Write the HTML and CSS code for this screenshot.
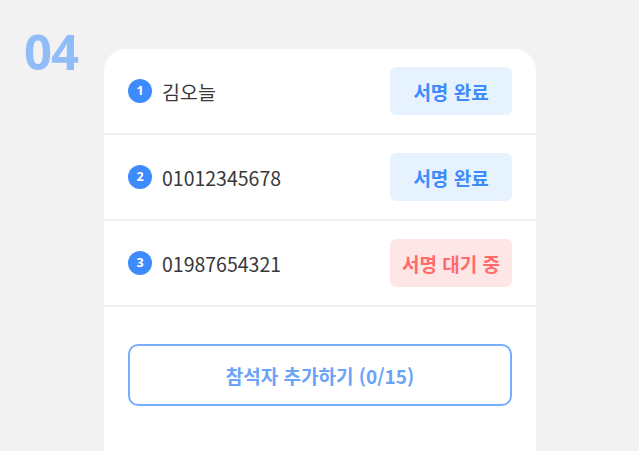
FILE: index.html
```html
<!DOCTYPE html>
<html lang="ko">
<head>
<meta charset="utf-8">
<link rel="stylesheet" href="styles.css">
</head>
<body>
<div class="page">
  <div class="step">04</div>
  <div class="card">
    <div class="row">
      <span class="num">1</span>
      <span class="name">김오늘</span>
      <span class="badge done">서명 완료</span>
    </div>
    <div class="row">
      <span class="num">2</span>
      <span class="name">01012345678</span>
      <span class="badge done">서명 완료</span>
    </div>
    <div class="row">
      <span class="num">3</span>
      <span class="name">01987654321</span>
      <span class="badge wait">서명 대기 중</span>
    </div>
    <div class="actions">
      <button class="add">참석자 추가하기 (0/15)</button>
    </div>
  </div>
</div>
</body>
</html>
```

FILE: styles.css
```css
html, body {
  margin: 0;
  padding: 0;
  background: #f2f2f2;
  overflow: hidden;
  height: 451px;
}
body {
  font-family: "Noto Sans CJK KR", "Noto Sans", sans-serif;
}
.page {
  display: flex;
  align-items: flex-start;
  padding: 21px 0 0 24px;
}
.step {
  font-family: "Noto Sans", "Noto Sans CJK KR", sans-serif;
  font-weight: 700;
  font-size: 49px;
  line-height: 60px;
  color: #90bcf8;
  width: 56px;
  letter-spacing: -1px;
}
.card {
  margin-left: 24px;
  margin-top: 28px;
  width: 432px;
  height: 420px;
  background: #fff;
  border-radius: 22px 22px 0 0;
  display: flex;
  flex-direction: column;
}
.row {
  display: flex;
  align-items: center;
  height: 84px;
  padding: 0 24px;
  border-bottom: 2px solid #f1f1f1;
}
.num {
  width: 24px;
  height: 24px;
  border-radius: 50%;
  background: #3d8bfd;
  color: #fff;
  font-family: "Noto Sans", sans-serif;
  font-weight: 700;
  font-size: 12.5px;
  line-height: 24px;
  text-align: center;
  flex: none;
}
.name {
  margin-left: 10px;
  font-size: 19.5px;
  font-weight: 400;
  color: #383838;
  flex: 1;
}
.badge {
  width: 122px;
  height: 48px;
  border-radius: 6px;
  display: flex;
  align-items: center;
  justify-content: center;
  font-weight: 700;
  font-size: 19px;
}
.done {
  background: #e7f2ff;
  color: #3d8bfd;
}
.wait {
  background: #ffe6e6;
  color: #ff6b6b;
}
.actions {
  padding: 37px 24px 0;
}
.add {
  width: 384px;
  height: 62px;
  border: 2px solid #78acfc;
  border-radius: 10px;
  background: #fff;
  color: #6aa3f8;
  font-family: "Noto Sans CJK KR", "Noto Sans", sans-serif;
  font-weight: 700;
  font-size: 19px;
  display: block;
}
```
